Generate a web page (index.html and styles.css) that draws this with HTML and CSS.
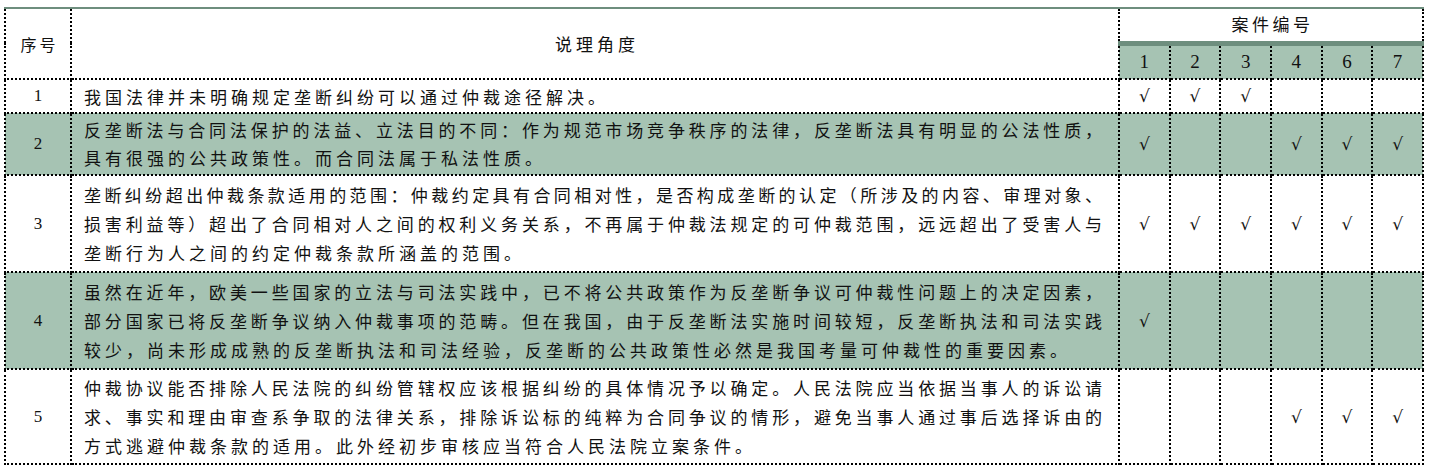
FILE: index.html
```html
<!DOCTYPE html>
<html lang="zh-CN">
<head>
<meta charset="utf-8">
<title>说理角度</title>
<link rel="stylesheet" href="styles.css">
</head>
<body>
<table class="grid">
  <colgroup>
    <col class="c-no"><col class="c-text">
    <col class="c-case"><col class="c-case"><col class="c-case"><col class="c-case"><col class="c-case"><col class="c-case">
  </colgroup>
  <thead>
    <tr class="h1">
      <th rowspan="2" class="no">序号</th>
      <th rowspan="2" class="title">说理角度</th>
      <th colspan="6" class="cases">案件编号</th>
    </tr>
    <tr class="h2">
      <th class="num">1</th><th class="num">2</th><th class="num">3</th><th class="num">4</th><th class="num">6</th><th class="num">7</th>
    </tr>
  </thead>
  <tbody>
    <tr class="r1">
      <td class="no">1</td>
      <td class="txt"><span class="last">我国法律并未明确规定垄断纠纷可以通过仲裁途径解决。</span></td>
      <td class="ck">√</td><td class="ck">√</td><td class="ck">√</td><td class="ck"></td><td class="ck"></td><td class="ck"></td>
    </tr>
    <tr class="r2 shade">
      <td class="no">2</td>
      <td class="txt"><span class="ln">反垄断法与合同法保护的法益、立法目的不同：作为规范市场竞争秩序的法律，反垄断法具有明显的公法性质，</span><span class="last">具有很强的公共政策性。而合同法属于私法性质。</span></td>
      <td class="ck">√</td><td class="ck"></td><td class="ck"></td><td class="ck">√</td><td class="ck">√</td><td class="ck">√</td>
    </tr>
    <tr class="r3">
      <td class="no">3</td>
      <td class="txt"><span class="ln">垄断纠纷超出仲裁条款适用的范围：仲裁约定具有合同相对性，是否构成垄断的认定（所涉及的内容、审理对象、</span><span class="ln">损害利益等）超出了合同相对人之间的权利义务关系，不再属于仲裁法规定的可仲裁范围，远远超出了受害人与</span><span class="last">垄断行为人之间的约定仲裁条款所涵盖的范围。</span></td>
      <td class="ck">√</td><td class="ck">√</td><td class="ck">√</td><td class="ck">√</td><td class="ck">√</td><td class="ck">√</td>
    </tr>
    <tr class="r4 shade">
      <td class="no">4</td>
      <td class="txt"><span class="ln">虽然在近年，欧美一些国家的立法与司法实践中，已不将公共政策作为反垄断争议可仲裁性问题上的决定因素，</span><span class="ln">部分国家已将反垄断争议纳入仲裁事项的范畴。但在我国，由于反垄断法实施时间较短，反垄断执法和司法实践</span><span class="last">较少，尚未形成成熟的反垄断执法和司法经验，反垄断的公共政策性必然是我国考量可仲裁性的重要因素。</span></td>
      <td class="ck">√</td><td class="ck"></td><td class="ck"></td><td class="ck"></td><td class="ck"></td><td class="ck"></td>
    </tr>
    <tr class="r5">
      <td class="no">5</td>
      <td class="txt"><span class="ln">仲裁协议能否排除人民法院的纠纷管辖权应该根据纠纷的具体情况予以确定。人民法院应当依据当事人的诉讼请</span><span class="ln">求、事实和理由审查系争取的法律关系，排除诉讼标的纯粹为合同争议的情形，避免当事人通过事后选择诉由的</span><span class="last">方式逃避仲裁条款的适用。此外经初步审核应当符合人民法院立案条件。</span></td>
      <td class="ck"></td><td class="ck"></td><td class="ck"></td><td class="ck">√</td><td class="ck">√</td><td class="ck">√</td>
    </tr>
  </tbody>
</table>
</body>
</html>
```
FILE: styles.css
```css
html, body {
  margin: 0;
  padding: 0;
  background: #ffffff;
}
body {
  padding: 7px 0 0 4px;
  font-family: "Liberation Serif", "Noto Sans CJK SC", serif;
  color: #111;
}
.grid {
  border-collapse: collapse;
  table-layout: fixed;
  width: 1418px;
  border-top: 2px solid #6e8e7e;
}
.c-no { width: 66px; }
.c-text { width: 1048px; }
.c-case { width: 50.67px; }

.grid th, .grid td {
  border: 2px dotted #000;
  padding: 0;
  font-weight: normal;
  vertical-align: middle;
  font-size: 17px;
}
.grid thead tr:first-child th { border-top: none; }

.h1 { height: 35px; }
.h2 { height: 36px; }
.no {
  text-align: center;
  font-family: "Liberation Serif", "Noto Sans CJK SC", serif;
  letter-spacing: 3px;
  padding-left: 3px !important;
}
.title {
  text-align: center;
  letter-spacing: 4px;
  padding-left: 4px !important;
  font-family: "Noto Sans CJK SC", sans-serif;
}
.h1 th.no { font-family: "Noto Sans CJK SC", sans-serif; font-size: 16px; }
.cases {
  text-align: center;
  letter-spacing: 3.5px;
  padding-left: 3px !important;
  font-family: "Noto Sans CJK SC", sans-serif;
  border-bottom: 5px solid #6e8e7e !important;
  padding-bottom: 2px !important;
}
.num {
  background: #a6c3b3;
  text-align: center;
  font-family: "Liberation Serif", serif;
  font-size: 19px !important;
  border-top: none !important;
}
.shade td { background: #a6c3b3; }

.r1 { height: 34px; }
.r2 { height: 62px; }
.r3 { height: 97px; }
.r4 { height: 97px; }
.r5 { height: 95px; }

.txt {
  padding: 0 14px 0 12px !important;
  font-family: "Noto Sans CJK SC", sans-serif;
  font-size: 16px;
  line-height: 29px;
}
.txt .ln {
  display: block;
  text-align: justify;
  text-align-last: justify;
  letter-spacing: 2px;
}
.txt .last {
  display: block;
  letter-spacing: 4px;
  white-space: nowrap;
}
.r2 .txt { line-height: 28px; }
.ck {
  text-align: center;
  font-family: "DejaVu Sans", sans-serif;
  font-size: 15px;
}
.r1 .no { font-size: 17px; }
```
